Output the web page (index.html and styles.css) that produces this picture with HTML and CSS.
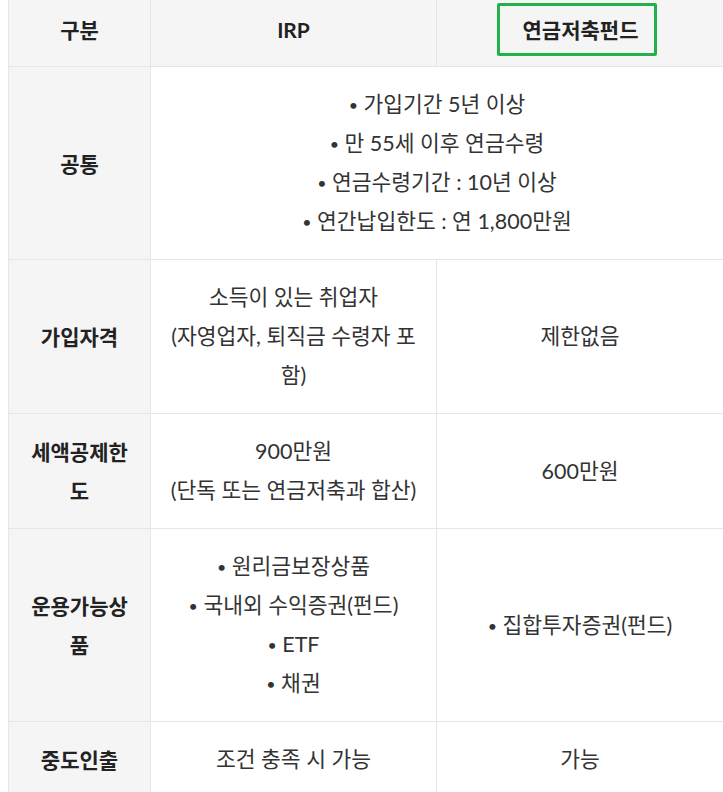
FILE: index.html
```html
<!DOCTYPE html>
<html lang="ko">
<head>
<meta charset="utf-8">
<link rel="stylesheet" href="styles.css">
</head>
<body>
<div class="wrap">
<table class="cmp">
  <colgroup>
    <col class="c1"><col class="c2"><col class="c3">
  </colgroup>
  <thead>
    <tr>
      <th><span class="hd">구분</span></th>
      <th class="wh"><span class="hd">IRP</span></th>
      <th class="wh"><span class="hd mark">연금저축펀드</span></th>
    </tr>
  </thead>
  <tbody>
    <tr class="r1">
      <th>공통</th>
      <td colspan="2"><span class="b">•</span> 가입기간 5년 이상<br><span class="b">•</span> 만 55세 이후 연금수령<br><span class="b">•</span> 연금수령기간 : 10년 이상<br><span class="b">•</span> 연간납입한도 : 연 1,800만원</td>
    </tr>
    <tr class="r2">
      <th>가입자격</th>
      <td>소득이 있는 취업자<br>(자영업자, 퇴직금 수령자 포함)</td>
      <td>제한없음</td>
    </tr>
    <tr class="r3">
      <th>세액공제한도</th>
      <td>900만원<br>(단독 또는 연금저축과 합산)</td>
      <td>600만원</td>
    </tr>
    <tr class="r4">
      <th>운용가능상품</th>
      <td><span class="b">•</span> 원리금보장상품<br><span class="b">•</span> 국내외 수익증권(펀드)<br><span class="b">•</span> ETF<br><span class="b">•</span> 채권</td>
      <td><span class="b">•</span> 집합투자증권(펀드)</td>
    </tr>
    <tr class="r5">
      <th>중도인출</th>
      <td>조건 충족 시 가능</td>
      <td>가능</td>
    </tr>
  </tbody>
</table>
</div>
</body>
</html>
```

FILE: styles.css
```css
html, body {
  margin: 0;
  padding: 0;
  background: #ffffff;
}

.wrap {
  padding-left: 8px;
}

.cmp {
  border-collapse: collapse;
  table-layout: fixed;
  width: 715px;
  font-family: Lato, "Noto Sans CJK KR", sans-serif;
  font-size: 21.5px;
  line-height: 39px;
  color: #333333;
}

.c1 { width: 142px; }
.c2 { width: 286px; }
.c3 { width: 287px; }

.cmp th,
.cmp td {
  border: 1px solid #e6e6e6;
  text-align: center;
  vertical-align: middle;
}

.cmp th {
  background: #f5f5f5;
  color: #222222;
  font-weight: 700;
  font-size: 21px;
  padding: 18px 16px;
}

.cmp td {
  background: #ffffff;
  padding: 18px 16px;
  font-weight: 400;
}

.cmp thead th {
  border-top: none;
  vertical-align: top;
  padding: 3px 10px 10px;
}

.cmp thead th.wh {
  background: #f5f5f5;
}

.hd {
  display: inline-block;
  padding: 7px 0;
  line-height: 39px;
}

.hd.mark {
  border: 3px solid #22b04b;
  border-radius: 2px;
  padding: 4px 16px 4px 23px;
  margin-right: 6px;
}

.b {
  font-size: 16px;
  vertical-align: 1px;
}
```
